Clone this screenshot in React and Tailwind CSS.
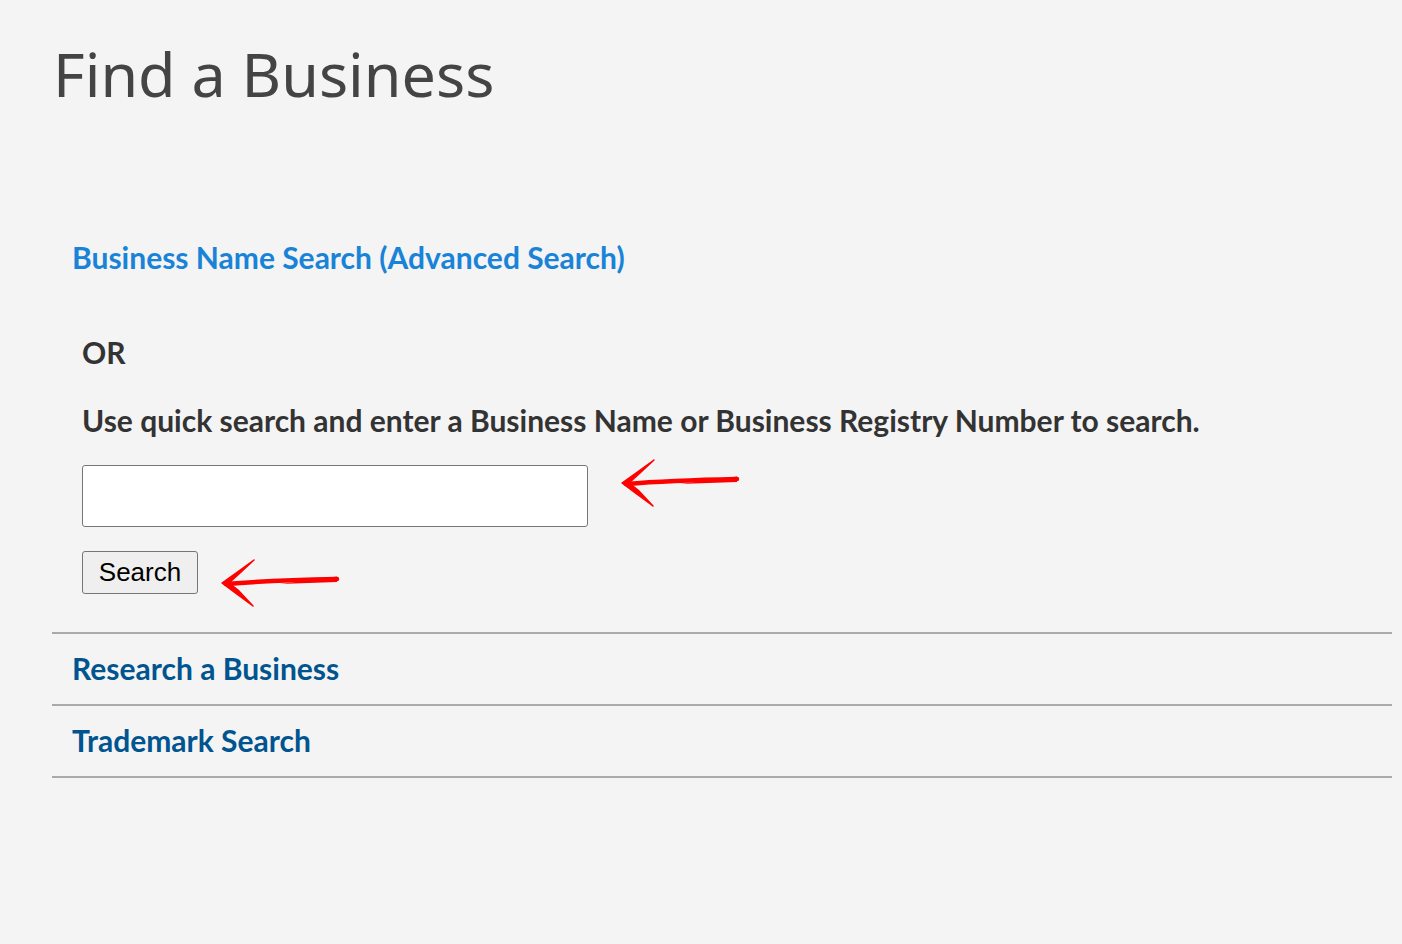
import React from "react";

function Arrow() {
  return (
    <svg width="120" height="50" viewBox="0 0 120 50" className="block">
      <path d="M6 25 C 30 23, 70 21, 117 20" stroke="#ff0000" strokeWidth="4.5" fill="none" strokeLinecap="round" />
      <path d="M117 17.5 L117 23 L60 25 Z" fill="#ff0000" />
      <path d="M34 1 L 16 14 L 2 24 L 14 33 L 33 47 L 18 31 L 9 24 L 20 14 Z" fill="#ff0000" stroke="#ff0000" strokeWidth="1.5" strokeLinejoin="round" />
    </svg>
  );
}

export default function App() {
  return (
    <div className="min-h-[944px] w-full bg-[#f4f4f4] pl-[52px] pr-[10px] pt-[37px]" style={{ fontFamily: "Lato, 'Noto Sans', sans-serif" }}>
      <h1 className="ml-[1px] text-[61px] leading-[74px] text-[#444]" style={{ fontFamily: "'Noto Sans', Lato, sans-serif" }}>
        Find a Business
      </h1>
      <div className="pl-[20px] pt-[128px]">
        <a className="block text-[30px] font-bold leading-[36px] text-[#1883d7]" href="#">
          Business Name Search (Advanced Search)
        </a>
      </div>
      <div className="pl-[30px] pt-[59px]">
        <p className="text-[30px] font-bold leading-[36px] text-[#333]">OR</p>
        <p className="pt-[32px] text-[30px] font-bold leading-[36px] text-[#333]">
          Use quick search and enter a Business Name or Business Registry Number to search.
        </p>
        <div className="mt-[27px] flex items-start gap-[32px]">
          <input className="h-[62px] w-[506px] rounded-[3px] border border-[#767676] bg-white" />
          <div className="-mt-[6px]"><Arrow /></div>
        </div>
        <div className="mt-[24px] flex items-start gap-[22px]">
          <button className="h-[43px] w-[116px] rounded-[3px] border border-[#767676] bg-[#efefef] text-[26px] text-black" style={{ fontFamily: "'Liberation Sans', Arial, sans-serif" }}>
            Search
          </button>
          <div className="mt-[8px]"><Arrow /></div>
        </div>
      </div>
      <div className="mt-[23px] border-t-2 border-[#aaa]">
        <a className="block h-[70px] pl-[20px] pt-[16px] text-[30px] font-bold leading-[36px] text-[#00548f]" href="#">Research a Business</a>
      </div>
      <div className="border-t-2 border-[#aaa]">
        <a className="block h-[70px] pl-[20px] pt-[16px] text-[30px] font-bold leading-[36px] text-[#00548f]" href="#">Trademark Search</a>
      </div>
      <div className="border-t-2 border-[#aaa]"></div>
    </div>
  );
}
